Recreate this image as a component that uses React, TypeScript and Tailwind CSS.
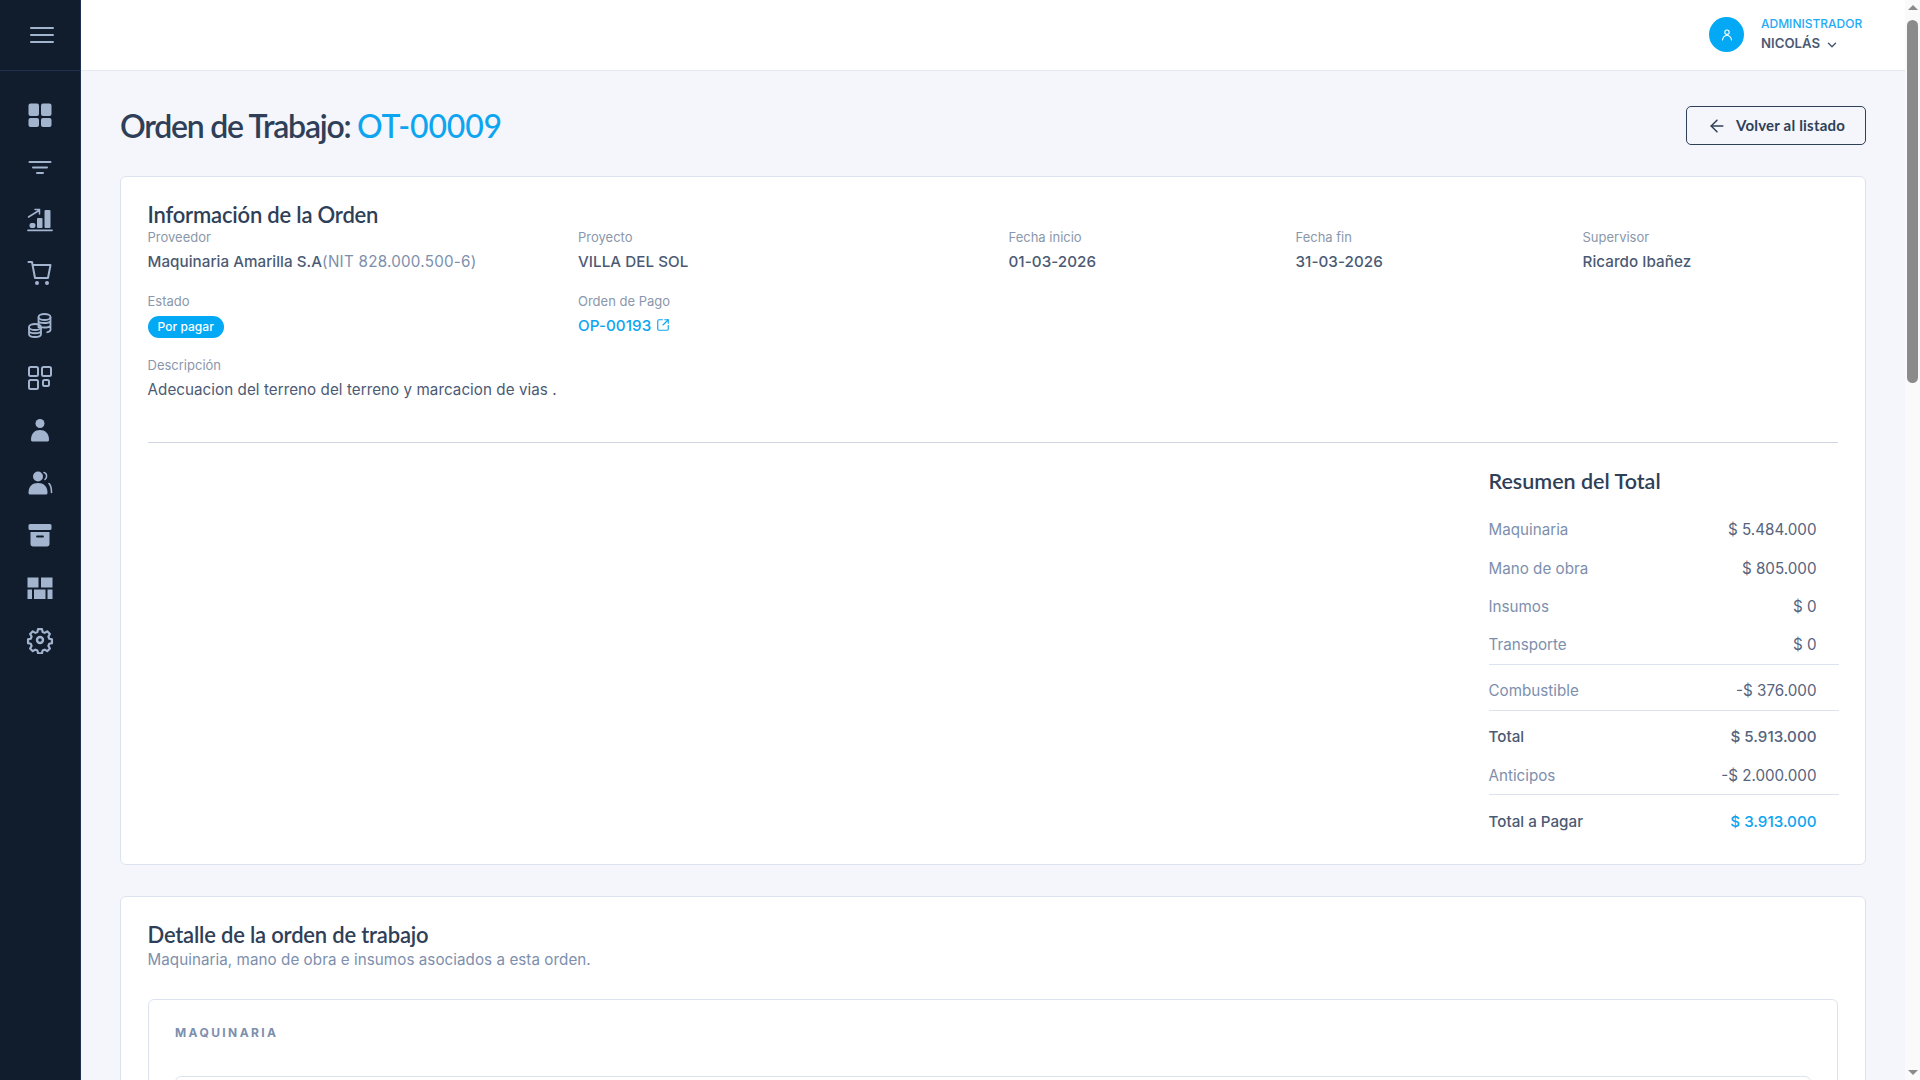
import { ArrowLeft, ChevronDown, SquareArrowOutUpRight } from "lucide-react";

const heading = "font-['Lato',sans-serif]";

const Icon = ({ children }: { children: React.ReactNode }) => (
  <div className="h-[52.5px] flex items-center justify-center pr-[1px]">
    <svg width="28" height="28" viewBox="0 0 28 28" fill="#a3b4cf" stroke="none">
      {children}
    </svg>
  </div>
);

const Sidebar = () => (
  <aside className="w-[81px] shrink-0 h-full bg-[#111c2d] border-r border-[#1f3050] flex flex-col">
    <div className="h-[71px] border-b border-[#1f3050] flex items-center justify-center">
      <svg width="26" height="20" viewBox="0 0 26 20" stroke="#a3b4cf" strokeWidth="2" strokeLinecap="round" className="ml-[4px]">
        <path d="M2 3h22M2 10h22M2 17h22" />
      </svg>
    </div>
    <nav className="pt-[18px] flex flex-col">
      <Icon>
        <rect x="2.5" y="2.5" width="10.5" height="12.5" rx="2" />
        <rect x="15" y="2.5" width="10.5" height="12.5" rx="2" />
        <rect x="2.5" y="17" width="10.5" height="9" rx="2" />
        <rect x="15" y="17" width="10.5" height="9" rx="2" />
      </Icon>
      <Icon>
        <g stroke="#a3b4cf" strokeWidth="2" strokeLinecap="round">
          <path d="M3.5 8h21M7 13.5h14M11 19h6" />
        </g>
      </Icon>
      <Icon>
        <rect x="18.5" y="4" width="6" height="18" rx="1" />
        <rect x="11" y="12" width="5.5" height="10" rx="1" />
        <rect x="3.5" y="17" width="6" height="5" rx="2" />
        <path d="M2 24.300h24" stroke="#a3b4cf" strokeWidth="1.800" strokeLinecap="round" />
        <path d="M2.500 11 13 4.500M9 3.500h4.500V8" fill="none" stroke="#a3b4cf" strokeWidth="1.500" strokeLinecap="round" />
      </Icon>
      <Icon>
        <path d="M2.5 3h3.5l3 16h13l2.5-13H7" fill="none" stroke="#a3b4cf" strokeWidth="2" strokeLinecap="round" strokeLinejoin="round" />
        <circle cx="11" cy="24" r="2" />
        <circle cx="21" cy="24" r="2" />
      </Icon>
      <Icon>
        <g fill="none" stroke="#a3b4cf" strokeWidth="1.8">
          <ellipse cx="18.5" cy="6" rx="6" ry="3" />
          <path d="M12.5 6v11M24.5 6v13c0 1-2 2-4 2.500M12.500 10.500c1 2 10 2 12 0M12.500 15c1 2 10 2 12 0" />
          <ellipse cx="9" cy="16" rx="6" ry="3" />
          <path d="M3 16v7c0 4 12 4 12 0v-7M3 20c1 3 11 3 12 0" />
        </g>
      </Icon>
      <Icon>
        <g fill="none" stroke="#a3b4cf" strokeWidth="2">
          <rect x="3" y="3" width="9" height="9" rx="1.500" />
          <rect x="16" y="3" width="9" height="9" rx="1.500" />
          <rect x="3" y="16" width="9" height="9" rx="1.500" />
          <rect x="17" y="16" width="6" height="6" rx="1.500" />
        </g>
      </Icon>
      <Icon>
        <circle cx="14" cy="7.500" r="4.500" />
        <path d="M5 24c0-7 4-10 9-10s9 3 9 10c0 1-1 1.500-2 1.500H7c-1 0-2-.5-2-1.500z" />
      </Icon>
      <Icon>
        <circle cx="12" cy="7.500" r="5" />
        <path d="M2.500 24c0-7 4-10 9.500-10s9.500 3 9.500 10c0 1-1 1.500-2 1.500H4.500c-1 0-2-.5-2-1.500z" />
        <path d="M18 3.500c3 .5 3.500 5 1 7M23 14.500c2 2 2.500 5 2.500 9" fill="none" stroke="#a3b4cf" strokeWidth="1.600" strokeLinecap="round" />
      </Icon>
      <Icon>
        <rect x="2.500" y="3" width="23" height="6" rx="1.500" />
        <path d="M4.500 11h19v12c0 1.500-1 2.500-2.500 2.500H7c-1.500 0-2.500-1-2.500-2.500z" />
        <path d="M11 15.500h6" stroke="#111c2d" strokeWidth="1.800" strokeLinecap="round" />
      </Icon>
      <Icon>
        <rect x="1.500" y="3.500" width="11" height="10" />
        <rect x="15" y="3.500" width="11.500" height="10" />
        <rect x="1.500" y="15.500" width="4.500" height="9.500" />
        <rect x="8" y="15.500" width="11.500" height="9.500" />
        <rect x="21.500" y="15.500" width="5" height="9.500" />
      </Icon>
      <Icon>
        <g fill="none" stroke="#a3b4cf" strokeWidth="2.400" strokeLinejoin="round">
          <path d="M11.800 3h4.400l.7 3.200 2.300 1 2.800-1.700 3 3-1.700 2.800 1 2.400 3 .7v4.200l-3 .7-1 2.400 1.700 2.800-3 3-2.800-1.700-2.300 1-.7 3h-4.400l-.7-3-2.300-1-2.800 1.700-3-3 1.700-2.800-1-2.400-3-.7v-4.200l3-.7 1-2.400-1.700-2.800 3-3 2.800 1.700 2.300-1z" transform="translate(1.400 .4) scale(.9)" />
          <circle cx="14" cy="14" r="3" />
        </g>
      </Icon>
    </nav>
  </aside>
);

const Field = ({ label, children, className = "" }: { label: string; children: React.ReactNode; className?: string }) => (
  <div className={className}>
    <p className="text-[13px] leading-[20px] text-[#8a97ab]">{label}</p>
    <div className="mt-[5px] text-[15.2px] leading-[20px] tracking-[0.05px] text-[#4b5a74]">{children}</div>
  </div>
);

const Row = ({ label, value, strong, accent, h = "h-[38.5px]", border }: { label: string; value: string; strong?: boolean; accent?: boolean; h?: string; border?: boolean }) => (
  <div className={`${h} ${border ? "border-b border-[#dde3ee]" : ""} flex items-center justify-between pr-[22px] text-[15.2px]`}>
    <span className={strong ? "text-[#4b5a74] font-medium" : "text-[#7d8fad]"}>{label}</span>
    <span className={`${accent ? "text-[#0ea5f0]" : "text-[#56647e]"} ${strong ? "font-medium" : ""}`}>{value}</span>
  </div>
);

export default function App() {
  return (
    <div className="h-screen w-full flex overflow-hidden bg-[#f4f6fb] font-['Inter',sans-serif]">
      <Sidebar />
      <div className="flex-1 min-w-0 h-full flex flex-col">
        <header className="h-[71px] shrink-0 bg-white border-b border-[#e5e9f2] flex items-center justify-end pr-[43px] pb-[1px]">
          <div className="w-[35px] h-[35px] rounded-full bg-[#03a9f4] flex items-center justify-center mr-[17px]">
            <svg width="14" height="14" viewBox="0 0 14 14" fill="none" stroke="white" strokeWidth="1.100" strokeLinecap="round">
              <circle cx="7" cy="4.200" r="2.200" />
              <path d="M2.500 12c.5-3 2.200-4.500 4.500-4.500s4 1.500 4.500 4.500" />
            </svg>
          </div>
          <div className="w-[101px] mb-[2px]">
            <p className="text-[12px] leading-[19px] font-medium text-[#22aaf5] whitespace-nowrap">ADMINISTRADOR</p>
            <div className="flex items-center mt-[1px] text-[13.200px] leading-[19px] font-semibold text-[#4b5a74]">
              NICOLÁS
              <ChevronDown className="w-[14px] h-[14px] ml-[5px] mt-[2px]" strokeWidth={2.500} />
            </div>
          </div>
        </header>
        <main className="flex-1 min-h-0 overflow-hidden px-[39px]">
          <div className="flex items-center justify-between pt-[35px] h-[75px] mb-[30px]">
            <h1 className={`${heading} text-[32px] font-semibold text-[#2f3f58] tracking-[-1.250px]`}>
              Orden de Trabajo: <span className="text-[#0ea5f0] font-medium tracking-[-0.200px]">OT-00009</span>
            </h1>
            <button className={`${heading} w-[180px] h-[39px] mb-[1px] rounded-[5px] border border-[#2f3f58] text-[15px] font-bold tracking-[0.200px] text-[#2f3f58] flex items-center justify-center gap-[9px]`}>
              <ArrowLeft className="w-[20px] h-[20px]" strokeWidth={1.800} />
              Volver al listado
            </button>
          </div>

          <section className="h-[689px] bg-white border border-[#dde3ee] rounded-[6px] px-[26.500px] pt-[25px]">
            <h2 className={`${heading} text-[22px] leading-[26px] font-semibold text-[#2f3f58] tracking-[-0.2px]`}>Información de la Orden</h2>
            <div className="grid grid-cols-[430.500px_430.500px_287px_287px_1fr] -mt-[1px]">
              <Field label="Proveedor">
                <span className="font-medium">Maquinaria Amarilla S.A</span><span className="text-[#7d8fad] tracking-[0.250px]">(NIT 828.000.500-6)</span>
              </Field>
              <Field label="Proyecto"><span className="font-medium">VILLA DEL SOL</span></Field>
              <Field label="Fecha inicio"><span className="font-medium">01-03-2026</span></Field>
              <Field label="Fecha fin"><span className="font-medium">31-03-2026</span></Field>
              <Field label="Supervisor"><span className="font-medium">Ricardo Ibañez</span></Field>
              <Field label="Estado" className="mt-[19px]">
                <span className="inline-flex items-center h-[22px] px-[10px] rounded-full bg-[#03a9f4] text-white text-[12px] font-medium">Por pagar</span>
              </Field>
              <Field label="Orden de Pago" className="mt-[19px]">
                <span className="flex items-center gap-[5px] text-[#0ea5f0] font-medium h-[22px] -mt-[1px]">
                  OP-00193
                  <SquareArrowOutUpRight className="w-[14px] h-[14px] mb-[2px]" strokeWidth={2} />
                </span>
              </Field>
            </div>
            <Field label="Descripción" className="mt-[17px]">
              Adecuacion del terreno del terreno y marcacion de vias .
            </Field>
            <div className="border-t border-[#cfd6e2] mt-[42px] mx-[0.500px]" />
            <div className="ml-auto w-[350px] pt-[24px]">
              <h3 className={`${heading} text-[21.500px] leading-[28px] font-semibold text-[#2f3f58] mb-[16px]`}>Resumen del Total</h3>
              <Row label="Maquinaria" value="$ 5.484.000" h="h-[39.500px]" />
              <Row label="Mano de obra" value="$ 805.000" h="h-[37.500px]" />
              <Row label="Insumos" value="$ 0" />
              <Row label="Transporte" value="$ 0" border />
              <Row label="Combustible" value="-$ 376.000" h="h-[46px] pt-[8px]" border />
              <Row label="Total" value="$ 5.913.000" h="h-[45px] pt-[8px]" strong />
              <Row label="Anticipos" value="-$ 2.000.000" h="h-[39px] pt-[2px]" border />
              <Row label="Total a Pagar" value="$ 3.913.000" h="h-[46px] pt-[8px]" strong accent />
            </div>
          </section>

          <section className="mt-[31px] h-[400px] bg-white border border-[#dde3ee] rounded-[6px] px-[27px] pt-[23px]">
            <h2 className={`${heading} text-[22px] leading-[30px] font-semibold text-[#2f3f58] tracking-[-0.2px] -ml-[0.500px]`}>Detalle de la orden de trabajo</h2>
            <p className="text-[15.2px] leading-[20px] tracking-[0.05px] text-[#7d8fad] -ml-[0.500px]">Maquinaria, mano de obra e insumos asociados a esta orden.</p>
            <div className="mt-[29px] h-[300px] border border-[#dde3ee] rounded-[6px] px-[26px] pt-[24px]">
              <p className="text-[12px] leading-[18px] font-bold tracking-[2.400px] text-[#7d8fad]">MAQUINARIA</p>
              <div className="mt-[34px] h-[200px] border border-[#dde3ee] rounded-[6px]" />
            </div>
          </section>
        </main>
      </div>
      <div className="w-[15px] shrink-0 h-full bg-[#fafafa] flex flex-col items-center">
        <div className="h-[15px] flex items-center justify-center">
          <div className="w-0 h-0 border-x-[5px] border-x-transparent border-b-[5px] border-b-[#8b8b8b]" />
        </div>
        <div className="w-[11px] h-[363px] mt-[5px] rounded-full bg-[#8b8b8b]" />
        <div className="flex-1" />
        <div className="h-[15px] flex items-center justify-center">
          <div className="w-0 h-0 border-x-[5px] border-x-transparent border-t-[5px] border-t-[#8b8b8b]" />
        </div>
      </div>
    </div>
  );
}
